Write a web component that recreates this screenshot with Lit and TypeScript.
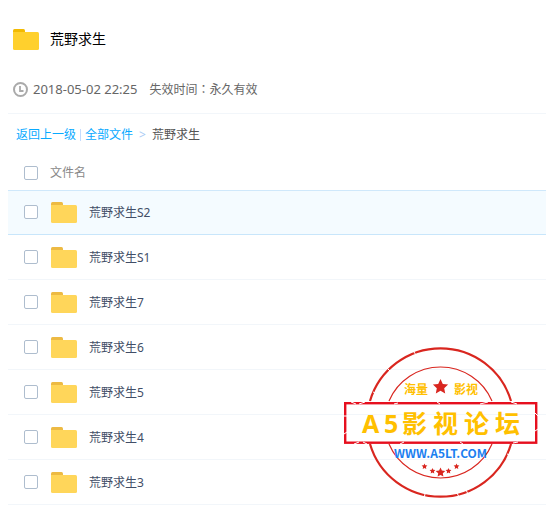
import { LitElement, html, css, svg } from "lit";
import { customElement, property } from "lit/decorators.js";

@customElement("folder-icon")
class FolderIcon extends LitElement {
  static styles = css`
    :host { display: block; width: 26px; height: 21px; }
    svg { display: block; }
    .tab { fill: var(--folder-tab, #edba43); }
    .body { fill: var(--folder-body, #ffd65a); }
  `;

  render() {
    return html`<svg width="26" height="21" viewBox="0 0 26 21" aria-hidden="true">
      <path class="tab" d="M0 6V1.5Q0 0 1.5 0H10.5Q12 0 12 1.5V6Z" />
      <path class="body" d="M0 3H24.5Q26 3 26 4.5V19.5Q26 21 24.5 21H1.5Q0 21 0 19.5Z" />
    </svg>`;
  }
}

const star = (cx: number, cy: number, r: number) => {
  const points = Array.from({ length: 10 }, (_, i) => {
    const radius = i % 2 ? r * 0.48 : r;
    const angle = (i * Math.PI) / 5 - Math.PI / 2;
    return `${(cx + radius * Math.cos(angle)).toFixed(1)},${(cy + radius * Math.sin(angle)).toFixed(1)}`;
  });
  return svg`<polygon class="star" points=${points.join(" ")} />`;
};

@customElement("forum-stamp")
class ForumStamp extends LitElement {
  static styles = css`
    :host { display: block; pointer-events: none; }
    svg { display: block; }
    text { font-family: "Noto Sans", "Noto Sans CJK SC", sans-serif; font-weight: 700; }
    .ring { fill: none; stroke: #d9261f; }
    .outer { stroke-width: 2.2; }
    .inner { stroke-width: 1.2; }
    .frame { fill: none; stroke: #e60f1e; stroke-width: 2.4; }
    .star { fill: #d9261f; }
    .scratch { fill: none; stroke: #fff; stroke-width: 1; }
    .gold { fill: #ffc000; }
    .small { font-size: 12px; }
    .name { font-size: 25px; }
    .site { font-family: "Noto Sans CJK SC", sans-serif; font-size: 12px; fill: #1b7ff0; }
  `;

  render() {
    return html`<svg width="198" height="153" viewBox="0 0 198 153">
      <path class="ring outer" d="M28 55A73.5 73.5 0 0 1 169 55M28 98A73.5 73.5 0 0 0 169 98" />
      <path class="ring inner" d="M47 55A56 56 0 0 1 150 55M47 98A56 56 0 0 0 150 98" />
      <rect class="frame" x="3.2" y="57.2" width="191" height="39.5" />
      <path class="scratch" d="M31 46l5 2M45 22l3 3M72 6l2 3M9 56l5 2M17 58l6-2M52 58l4-1M95 56l3 2M138 58l8-2M169 56l6 2M2 70h3M2 88l3-2M12 98l5-2M21 96l4 2M58 98l4-2M118 96l3 2M171 97l5-1M193 67l3 3M193 85l3-2M83 148l-1 4M115 147l2 4M124 144l2 4M165 108l3 1M64 119l2-3M146 113l2 1" />
      <text class="gold small" x="62" y="48">海量</text>
      <text class="gold small" x="112" y="48">影视</text>
      ${star(98.5, 41, 8)}
      <text class="gold name" x="20 42 60 91 122 153" y="87">A5影视论坛</text>
      <text class="site" x="98.5" y="112" text-anchor="middle">WWW.A5LT.COM</text>
      ${star(82.5, 120.5, 3)}${star(90.5, 125, 3)}${star(98.5, 126.5, 5)}${star(106.5, 125, 3)}${star(114.5, 120.5, 3)}
    </svg>`;
  }
}

@customElement("app-root")
class AppRoot extends LitElement {
  @property({ attribute: false }) files = ["S2", "S1", "7", "6", "5", "4", "3"].map((n) => `荒野求生${n}`);

  static styles = css`
    :host {
      display: block;
      font: 12px/20px "Noto Sans", "Noto Sans CJK SC", sans-serif;
      color: #424e67;
      background: #fff;
    }
    .page { padding: 24px 0 3px 8px; }
    .title { display: flex; align-items: center; gap: 11px; height: 30px; padding-left: 5px; }
    .title folder-icon { --folder-tab: #f2ba02; --folder-body: #ffd02d; }
    h1 { margin: 0; font-size: 14px; font-weight: 400; color: #000; }
    .meta {
      display: flex; align-items: center; height: 20px;
      padding: 25px 0 14px 5px; border-bottom: 1px solid #f2f6fa; color: #666;
    }
    .meta svg { margin-right: 5px; }
    time { font-size: 13px; margin-right: 12px; }
    .colon { font-family: "Noto Sans CJK TC", sans-serif; }
    .crumbs { display: flex; align-items: center; height: 20px; padding: 11px 8px 10px; color: #555; }
    .crumbs a { color: #09aaff; text-decoration: none; }
    .bar { width: 1px; height: 12px; margin: 0 4px; background: #c4dbfe; }
    .arrow { margin: 0 6px; color: #a9cbf5; }
    .list { position: relative; }
    table { width: 100%; border-collapse: separate; border-spacing: 0; }
    th, td { box-sizing: border-box; height: 45px; padding: 0; text-align: left; font-weight: 400; border-bottom: 1px solid #f2f6fa; }
    th { height: 35px; color: #888; border: 0; }
    .picked td { padding-bottom: 1px; background: #f4fbff; border-top: 1px solid #cfe8fb; border-bottom-color: #c8e6fb; }
    .pick { width: 42px; padding-left: 16px; }
    .file { display: flex; align-items: flex-end; gap: 12px; height: 22px; padding-left: 1px; }
    input {
      appearance: none; display: block; box-sizing: border-box; width: 14px; height: 14px;
      margin: 0; border: 1px solid #aebdce; border-radius: 2px; background: #fff;
    }
    input:checked { background: #09aaff; }
    forum-stamp { position: absolute; right: 6px; bottom: 6px; }
  `;

  render() {
    return html`<main class="page">
      <header>
        <div class="title"><folder-icon></folder-icon><h1>荒野求生</h1></div>
        <div class="meta">
          <svg width="15" height="15" viewBox="0 0 15 15" fill="none" stroke="#aaa" aria-hidden="true">
            <circle cx="7.5" cy="7.5" r="6.5" stroke-width="2" />
            <path d="M7 4v5h3.5" stroke-width="1.8" />
          </svg>
          <time datetime="2018-05-02T22:25">2018-05-02 22:25</time>
          <span>失效时间<span class="colon">：</span>永久有效</span>
        </div>
      </header>
      <nav class="crumbs">
        <a href="#up">返回上一级</a><span class="bar"></span><a href="#all">全部文件</a>
        <span class="arrow">&gt;</span><span>荒野求生</span>
      </nav>
      <section class="list">
        <table>
          <thead>
            <tr>
              <th class="pick"><input type="checkbox" aria-label="全选" /></th>
              <th>文件名</th>
            </tr>
          </thead>
          <tbody>
            ${this.files.map(
              (name, i) => html`<tr class=${i === 0 ? "picked" : ""}>
                <td class="pick"><input id="file-${i}" type="checkbox" /></td>
                <td><label class="file" for="file-${i}"><folder-icon></folder-icon><span>${name}</span></label></td>
              </tr>`
            )}
          </tbody>
        </table>
        <forum-stamp></forum-stamp>
      </section>
    </main>`;
  }
}
